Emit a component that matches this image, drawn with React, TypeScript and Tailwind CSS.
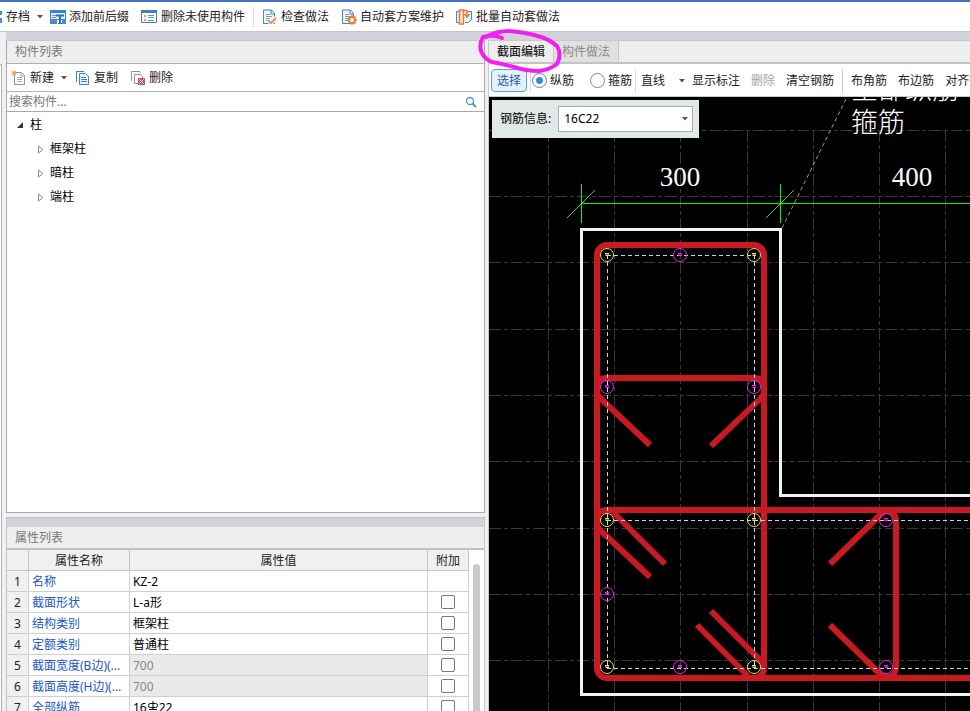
import type { ReactNode } from "react";

const Caret = () => (
  <svg width="6" height="4" viewBox="0 0 6 4" className="shrink-0" aria-hidden="true">
    <path d="M0 0h6L3 3.6z" fill="#555" />
  </svg>
);

const Icon = ({ children }: { children: ReactNode }) => (
  <svg width="16" height="16" viewBox="0 0 16 16" fill="none" className="shrink-0" aria-hidden="true">
    {children}
  </svg>
);

const PrefixIcon = () => (
  <Icon>
    <path d="M.5 1.5h15v9H.5z" fill="#e8f1fb" stroke="#3f7fca" />
    <path d="M0 1h16v3H0z" fill="#3f7fca" />
    <path d="M2 6.5h4M2 8.5h4" stroke="#5a92d4" />
    <path d="M6 6.5h8M10 7v8" stroke="#2d6fc0" strokeWidth="2" />
    <path d="M0 10h7v5H0zM12 10h4v5h-4z" fill="#4b8ad2" />
    <path d="M8 14.5h4" stroke="#2d6fc0" />
  </Icon>
);
const UnusedIcon = () => (
  <Icon>
    <path d="M.5 1.5h15v12H.5z" fill="#fff" stroke="#3f7fca" />
    <path d="M0 1h16v3H0z" fill="#3f7fca" />
    <path d="M3 6h2v2H3zM3 10h2v2H3z" fill="#f0954b" />
    <path d="M7 6.5h6M7 8.5h6M7 11.5h6" stroke="#5a92d4" />
  </Icon>
);
const DocBase = () => (
  <>
    <path d="M1.5 1v13.5h11V4.5L9.5 1z" fill="#f1f7fd" stroke="#4c83be" />
    <path d="M9 1v4h4" stroke="#4c83be" />
    <path d="M4 5.5h4M4 7.5h6M4 9.5h4M4 11.5h2" stroke="#6f9fce" />
  </>
);
const CheckIcon = () => (
  <Icon>
    <DocBase />
    <path d="M6 11l3 3 5-5" stroke="#fff" strokeWidth="4" />
    <path d="M6 11l3 3 5-5" stroke="#ea8a45" strokeWidth="1.8" />
  </Icon>
);
const MaintainIcon = () => (
  <Icon>
    <DocBase />
    <circle cx="11" cy="11" r="3" stroke="#e4803a" strokeWidth="2" fill="#fff" />
    <path d="M11 6v2M11 14v2M6 11h2M14 11h2M7.5 7.5L9 9M13 13l1.5 1.5M14.5 7.5L13 9M9 13l-1.5 1.5" stroke="#e4803a" strokeWidth="1.5" />
  </Icon>
);
const BatchIcon = () => (
  <Icon>
    <path d="M3 2.5H.5v11H3M12 2.5h3.5v8l-3 3H9" fill="#e9f3fd" stroke="#4c83be" />
    <path d="M3.5 1h4v14h-4zM7.5 1.5H11V7M8.5 5L11 8l2.5-3" stroke="#e4803a" strokeWidth="1.5" fill="#fde5d1" />
  </Icon>
);
const NewIcon = () => (
  <Icon>
    <path d="M3.5 2.5h7l3 3v9h-10z" fill="#fff" stroke="#8d9399" />
    <path d="M10 2v4h4M6 7.5h5M6 9.5h5M6 11.5h5" stroke="#a5abb0" />
    <path d="M3 0v6M0 3h6M1 1l4 4M5 1L1 5" stroke="#f0a137" />
  </Icon>
);
const CopyIcon = () => (
  <Icon>
    <path d="M1.5 12V1.5H9" stroke="#3d83c4" />
    <path d="M4.5 3.5h6l3 3v8h-9z" fill="#eaf4fd" stroke="#3d83c4" />
    <path d="M6 7.5h5M6 9.5h6M6 11.5h6" stroke="#3d83c4" />
  </Icon>
);
const DeleteIcon = () => (
  <Icon>
    <path d="M1.5 11V1.5H10V3" stroke="#8d9399" />
    <path d="M4.5 4.5h6l2 2v7h-8z" fill="#fff" stroke="#8d9399" />
    <path d="M8 8h7v7H8z" fill="#d05555" />
    <path d="M9.5 9.5l4 4M13.5 9.5l-4 4" stroke="#fff" />
  </Icon>
);

const topActions = [
  { label: "添加前后缀", icon: <PrefixIcon />, box: "ml-[7px] gap-[3px]" },
  { label: "删除未使用构件", icon: <UnusedIcon />, box: "ml-3 gap-1" },
  { label: "检查做法", icon: <CheckIcon />, box: "ml-2 gap-[3px]" },
  { label: "自动套方案维护", icon: <MaintainIcon />, box: "ml-3 gap-[3px]" },
  { label: "批量自动套做法", icon: <BatchIcon />, box: "ml-3 gap-1" },
];

function TopBar() {
  return (
    <header className="flex h-8 shrink-0 items-center overflow-hidden whitespace-nowrap border-b border-t-2 border-b-[#c6c6c9] border-t-[#4472c4] bg-white">
      <button className="flex items-center gap-1">
        <svg width="2" height="12" aria-hidden="true"><path d="M0 0h2v12H0z" fill="#4b8ad2" /><path d="M0 4h2v3H0z" fill="#fff" /></svg>
        存档
        <span className="ml-[3px]"><Caret /></span>
      </button>
      {topActions.map((a, i) => (
        <div key={a.label} className="flex items-center">
          {i === 2 && <span className="ml-2 h-5 w-px bg-[#dcdcdc]" />}
          <button className={`flex items-center ${a.box}`}>
            {a.icon}
            {a.label}
          </button>
        </div>
      ))}
    </header>
  );
}

const treeItems = ["框架柱", "暗柱", "端柱"];

function ComponentList() {
  return (
    <section className="flex min-h-0 flex-1 flex-col border border-[#a9a9ab] border-t-[#c8c8cc] bg-white">
      <h2 className="flex h-[22px] shrink-0 items-center bg-[#eeeeee] pl-2 text-[#777]">构件列表</h2>
      <div className="flex h-[29px] shrink-0 items-center border-y border-[#b0b0b0] pl-1">
        <button className="flex items-center gap-[3px]"><NewIcon />新建<span className="ml-1"><Caret /></span></button>
        <button className="ml-2 flex items-center gap-[3px]"><CopyIcon />复制</button>
        <button className="ml-3 flex items-center gap-[3px]"><DeleteIcon />删除</button>
      </div>
      <div className="flex h-5 shrink-0 items-center border-b border-[#a9a9ab] pl-0.5 pr-[7px]">
        <input aria-label="搜索构件" placeholder="搜索构件..." className="h-4 min-w-0 flex-1 outline-none placeholder:text-[#777]" />
        <svg width="12" height="12" viewBox="0 0 12 12" fill="none" stroke="#4f9ac8" aria-hidden="true">
          <circle cx="5" cy="5" r="3.5" strokeWidth="1.3" />
          <path d="M7.5 7.5L11 11" strokeWidth="2" />
        </svg>
      </div>
      <ul className="pt-px text-black">
        <li>
          <div className="flex h-6 items-center gap-[7px] pl-2.5">
            <svg width="6" height="6" aria-hidden="true"><path d="M6 0v6H0z" fill="#333" /></svg>
            柱
          </div>
          <ul>
            {treeItems.map((t) => (
              <li key={t} className="flex h-6 items-center gap-1.5 pl-[31px]">
                <svg width="6" height="9" aria-hidden="true"><path d="M.5 1l4.5 3.5L.5 8z" fill="#fff" stroke="#888" /></svg>
                {t}
              </li>
            ))}
          </ul>
        </li>
      </ul>
    </section>
  );
}

const Rebar = () => (
  <svg width="12" height="16" viewBox="0 0 12 16" fill="none" stroke="#000" className="shrink-0" role="img" aria-label="三级钢">
    <rect x="1.5" y="3.5" width="9" height="4" rx="2" />
    <path d="M6 1v9M2 9.5h8" />
  </svg>
);

const properties: { name: string; value: ReactNode; locked?: boolean; extra?: boolean }[] = [
  { name: "名称", value: "KZ-2" },
  { name: "截面形状", value: "L-a形", extra: true },
  { name: "结构类别", value: "框架柱", extra: true },
  { name: "定额类别", value: "普通柱", extra: true },
  { name: "截面宽度(B边)(...", value: "700", locked: true, extra: true },
  { name: "截面高度(H边)(...", value: "700", locked: true, extra: true },
  { name: "全部纵筋", value: <span className="flex items-center">16<Rebar />22</span>, extra: true },
];

function PropertyList() {
  const th = "border-b border-r border-[#c4c4c4] bg-[#f0f0f0] pt-px font-normal";
  const td = "border-b border-r border-[#cfcfcf] pt-px";
  return (
    <section className="flex h-[194px] shrink-0 flex-col overflow-hidden border-x border-t border-[#c4c4c8] bg-white">
      <div className="h-[9px] shrink-0 bg-[#d2d3da]" />
      <h2 className="flex h-[23px] shrink-0 items-center border-b-2 border-[#c0c0c0] bg-[#eeeeee] pl-2 text-[#777]">属性列表</h2>
      <div className="flex min-h-0 flex-1">
        <div className="min-w-0 flex-1 overflow-hidden">
          <table className="w-full table-fixed border-separate border-spacing-0 whitespace-nowrap">
            <colgroup>
              <col className="w-[22px]" />
              <col className="w-[101px]" />
              <col />
              <col className="w-[41px]" />
            </colgroup>
            <thead>
              <tr className="h-[21px]">
                <th className={th} aria-label="序号" />
                <th className={th}>属性名称</th>
                <th className={th}>属性值</th>
                <th className={th}>附加</th>
              </tr>
            </thead>
            <tbody>
              {properties.map((p, i) => (
                <tr key={p.name} className="h-[21px]">
                  <td className={`${td} bg-[#f0f0f0] text-center`}>{i + 1}</td>
                  <td className={`${td} pl-[3px] text-[#1b57c4]`}>{p.name}</td>
                  <td className={`${td} pl-[3px] ${p.locked ? "bg-[#eaeaea] text-[#888]" : "text-black"}`}>{p.value}</td>
                  <td className="border-b border-r border-[#cfcfcf]">
                    {p.extra && (
                      <input type="checkbox" aria-label={`附加 ${p.name}`} className="mx-auto block size-3.5 appearance-none rounded-xs border border-[#777] bg-white" />
                    )}
                  </td>
                </tr>
              ))}
            </tbody>
          </table>
        </div>
        <div className="w-[15px] shrink-0 px-1 pt-3.5">
          <div className="h-full rounded-t-full bg-[#c9c9c9]" />
        </div>
      </div>
    </section>
  );
}

const gridX = [548, 614, 680, 747, 813, 879, 945];
const gridY = [130, 196, 262, 329, 395, 461, 528, 594, 660];
const cornerBars = [[607, 255], [754, 255], [607, 520], [754, 520], [607, 667], [754, 667]];
const sideBars = [[680, 255], [607, 387], [754, 387], [607, 594], [680, 667], [886, 520], [886, 667]];

const Bar = ({ x, y, color }: { x: number; y: number; color: string }) => (
  <g stroke={color} fill="none">
    <circle cx={x} cy={y} r="6.5" />
    <path d={`M${x - 2} ${y - 1.5}h4M${x - 1} ${y + 0.5}h3M${x - 1} ${y - 2}v3M${x + 1} ${y - 2}v3`} />
  </g>
);

function SectionDrawing() {
  return (
    <svg viewBox="489 97 481 614" preserveAspectRatio="xMinYMin slice" className="absolute inset-0 size-full" role="img" aria-label="柱截面配筋图">
      <g stroke="#383838" strokeDasharray="12 3 4 3" shapeRendering="crispEdges">
        {gridX.map((x) => <path key={x} d={`M${x + 0.5} 130V711`} />)}
        {gridY.map((y) => <path key={y} d={`M489 ${y + 0.5}H970`} />)}
      </g>
      <path d="M782 228L847 97" stroke="#999" strokeDasharray="4 3" />
      <path d="M567 218l28-28M766 218l28-28" stroke="#22e022" />
      <g fill="#10f010" shapeRendering="crispEdges">
        <rect x="581" y="203" width="389" height="1" />
        <rect x="581" y="184" width="1" height="39" />
        <rect x="780" y="184" width="1" height="39" />
      </g>
      <path d="M970 495.5H780.5V229.5H581.5V694.5H970" fill="none" stroke="#f2f2f2" strokeWidth="3" />
      <g fill="none" stroke="#c81a22" strokeWidth="6">
        <rect x="597" y="245" width="167" height="433" rx="10" />
        <path d="M597 390v-2q0-10 10-10h147q10 0 10 10v2" />
        <path d="M597 522v-2q0-10 10-10H970M607 678H970" />
        <path d="M880 512q16-4 16 10V666q0 14-16 10" />
        <path d="M597 392q0 3 3 6l50 47M764 392q0 3-3 6l-50 48" />
        <path d="M597 524q0 3 3 6l50 47M613 512l52 52M711 611l53 53M697 625l51 51M884 511l-54 53M830 625l53 52" />
      </g>
      <g stroke="#c5d8ea" strokeDasharray="4 3" shapeRendering="crispEdges">
        <path d="M607.5 255V667M754.5 255V667M607 255.5H754M607 520.5H970M607 668.5H970" />
      </g>
      {cornerBars.map(([x, y]) => <Bar key={`${x}-${y}`} x={x} y={y} color="#f0e05a" />)}
      {sideBars.map(([x, y]) => <Bar key={`${x}-${y}`} x={x} y={y} color="#e62be6" />)}
      <g fill="#fff" fontFamily="'Liberation Serif', 'Noto Sans CJK SC', serif" fontSize="27" fontWeight="300">
        <text x="680" y="186" textAnchor="middle">300</text>
        <text x="912" y="186" textAnchor="middle">400</text>
        <text x="851" y="99">全部纵筋</text>
        <text x="851" y="132">箍筋</text>
      </g>
    </svg>
  );
}

function SectionEditor() {
  const radio = "size-[15px] appearance-none rounded-full border border-[#888] bg-white checked:border-[#6a7f99] checked:bg-[radial-gradient(circle,#3f86d8_3px,white_4px)]";
  return (
    <main className="flex min-w-0 flex-1 flex-col border-l border-[#c8c8cc] bg-white">
      <div role="tablist" className="flex h-6 shrink-0 border-b-2 border-t border-b-[#c2c2c4] border-t-[#c8c8cc] bg-[#eeeeee]">
        <button role="tab" aria-selected="true" className="border-r border-[#c8c8c8] px-2 font-medium text-[#222]">截面编辑</button>
        <button role="tab" aria-selected="false" className="border-r border-[#c8c8c8] bg-[#e0e0e0] px-2 text-[#888]">构件做法</button>
      </div>
      <div className="flex h-[33px] shrink-0 items-center overflow-hidden whitespace-nowrap border-b border-[#c8c8c8] pl-0.5 pt-px">
        <button className="h-[23px] shrink-0 rounded-sm border border-[#5b9be0] bg-[#e5f1fc] px-[5px] text-[#1c5fae]">选择</button>
        <span className="ml-[3px] h-6 w-px shrink-0 bg-[#ddd]" />
        <label className="ml-px flex shrink-0 items-center gap-[3px]"><input type="radio" name="bar" defaultChecked className={radio} />纵筋</label>
        <label className="ml-4 flex shrink-0 items-center gap-[3px]"><input type="radio" name="bar" className={radio} />箍筋</label>
        <span className="ml-[3px] h-6 w-px shrink-0 bg-[#ddd]" />
        <div className="ml-[5px] flex shrink-0 items-center">
          <select aria-label="绘制方式" className="w-[38px] appearance-none outline-none"><option>直线</option></select>
          <Caret />
        </div>
        <button className="ml-[7px] shrink-0">显示标注</button>
        <button disabled className="ml-[11px] shrink-0 text-[#a5a5a5]">删除</button>
        <button className="ml-[11px] shrink-0">清空钢筋</button>
        <span className="ml-2 h-6 w-px shrink-0 bg-[#ccc]" />
        <button className="ml-2 shrink-0">布角筋</button>
        <button className="ml-[11px] shrink-0">布边筋</button>
        <button className="ml-[11px] shrink-0">对齐钢筋</button>
      </div>
      <div className="relative min-h-0 flex-1 overflow-hidden bg-black">
        <SectionDrawing />
        <div className="absolute left-[3px] top-[3px] flex h-[38px] items-center gap-[7px] bg-[#e1e8e8] pl-2 pr-1.5 text-black">
          <label htmlFor="bar-info" className="whitespace-nowrap">钢筋信息:</label>
          <div className="relative flex items-center">
            <select id="bar-info" className="h-[26px] w-[135px] appearance-none border border-[#a8adad] bg-white pl-[5px] outline-none"><option>16C22</option></select>
            <span className="pointer-events-none absolute right-[5px]"><Caret /></span>
          </div>
        </div>
      </div>
    </main>
  );
}

export default function App() {
  return (
    <div className="relative flex h-screen flex-col overflow-hidden bg-[#f0f0f2] font-['Noto_Sans','Noto_Sans_CJK_SC',sans-serif] text-xs leading-4 text-[#222]">
      <TopBar />
      <div className="flex min-h-0 flex-1">
        <div className="flex w-1.5 shrink-0 flex-col">
          <div className="h-8" />
          <div className="w-0.5 flex-1 border-r border-t border-[#b0b0b0] bg-white" />
        </div>
        <div className="flex min-w-0 flex-1 flex-col">
          <div className="h-2 shrink-0 bg-[#d2d3da]" />
          <div className="flex min-h-0 flex-1">
            <div className="flex w-[479px] shrink-0 flex-col gap-1">
              <ComponentList />
              <PropertyList />
            </div>
            <div className="w-[3px] shrink-0" />
            <SectionEditor />
          </div>
        </div>
      </div>
      <svg width="90" height="50" viewBox="476 26 90 50" className="pointer-events-none absolute left-[476px] top-[26px]" fill="none" stroke="#f020f0" strokeWidth="4" strokeLinecap="round" strokeLinejoin="round" aria-hidden="true">
        <path d="M502 38Q494 34 483 37Q479 44 481 51Q484 59 492 62Q502 64 514 67Q526 71 539 71Q549 70 557 64Q562 54 557 46Q550 40 541 37Q525 32 509 31Q496 31 486 37" />
      </svg>
    </div>
  );
}
